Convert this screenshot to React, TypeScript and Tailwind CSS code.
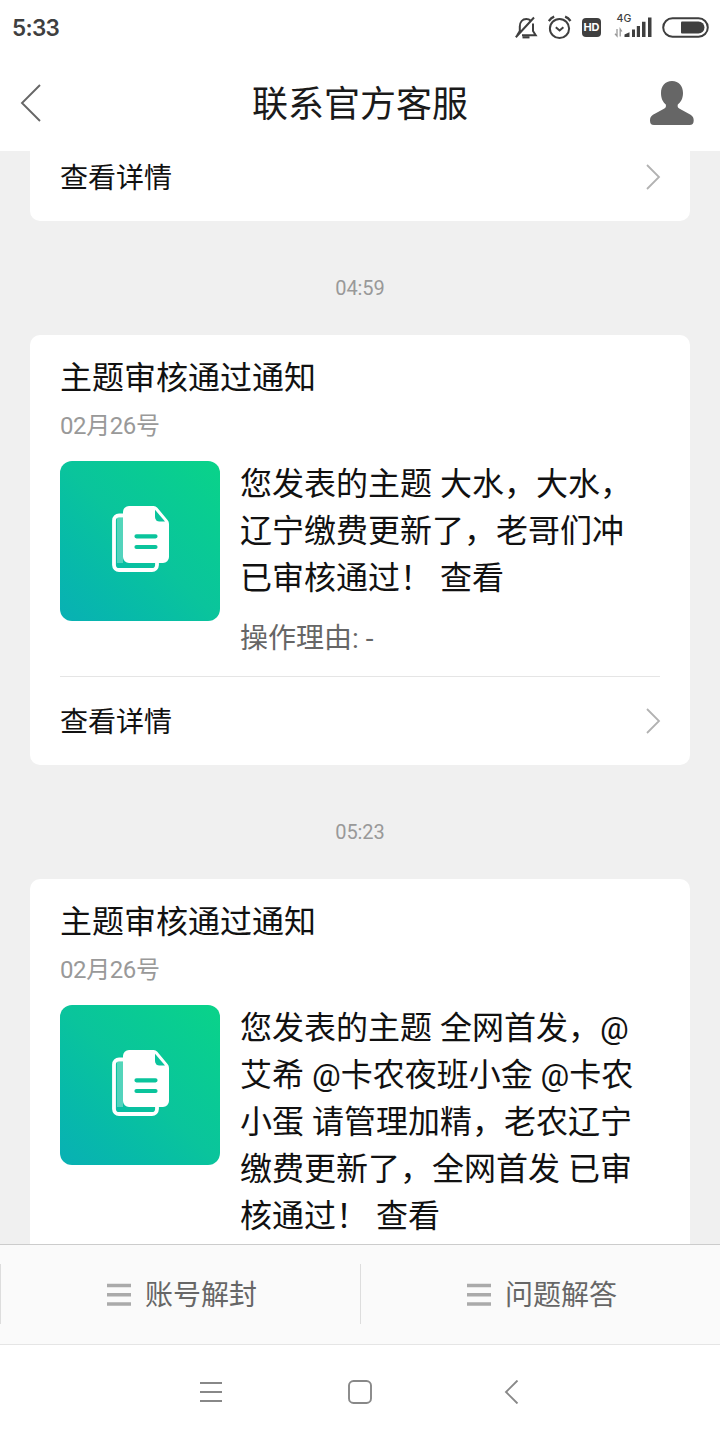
import { ReactNode } from 'react';

const messages = [
  {
    id: 1,
    time: '04:59',
    title: '主题审核通过通知',
    date: '02月26号',
    lines: ['您发表的主题 大水，大水，', '辽宁缴费更新了，老哥们冲', '已审核通过！ 查看'],
    reason: '操作理由: -',
  },
  {
    id: 2,
    time: '05:23',
    title: '主题审核通过通知',
    date: '02月26号',
    lines: ['您发表的主题 全网首发，@', '艾希 @卡农夜班小金 @卡农', '小蛋 请管理加精，老农辽宁', '缴费更新了，全网首发 已审', '核通过！ 查看'],
    reason: '',
  },
];

function StatusBar() {
  return (
    <div className="flex h-14 shrink-0 items-center justify-between pl-3 pr-[11px] text-[#3f3f3f]">
      <span className="font-['Inter'] text-[22.5px] font-semibold leading-none tracking-[-0.7px]">5:33</span>
      <div className="flex items-center">
        <svg width="24" height="26" viewBox="0 0 24 26" fill="none" stroke="currentColor" strokeWidth="2">
          <path d="M4.800 16.500V11.500C4.800 7 7.500 4 11.300 4c1.800 0 3.200.5 4.200 1.500M18 8.500V16l2.700 4.200H7M.8 22.300L19 2.500M4.800 16l-2.600 4.200" />
          <path d="M7.500 22.300h7" strokeWidth="2.200" />
        </svg>
        <svg className="ml-[9px]" width="24" height="26" viewBox="0 0 24 26" fill="none" stroke="currentColor" strokeWidth="2">
          <circle cx="11.500" cy="13.500" r="9.600" />
          <path d="M7.800 12.300l3.800 3.200 3.800-3.200" />
          <path d="M.8 6C2.200 4 4 2.500 6.200 1.700M22.500 6c-1.400-2-3.200-3.500-5.400-4.300" strokeWidth="2.300" />
        </svg>
        <span className="mb-[2px] ml-[10px] flex h-[19px] w-[19px] items-center justify-center rounded bg-[#3f3f3f] font-['Inter'] text-[11px] font-bold leading-none text-white">
          HD
        </span>
        <svg className="ml-[13px]" width="38" height="28" viewBox="0 0 38 28" fill="currentColor">
          <text x="2.500" y="8" fontSize="10.500" fontWeight="500" fontFamily="Inter, sans-serif">4G</text>
          <path d="M3 15v7L1 19.800M6.200 22.500V15l1.700 2.500" fill="none" stroke="#999" strokeWidth="1.300" />
          <path d="M10.500 23v-2.500l5-2.300V23zM18 15.500h3V23h-3zM22.800 12h3.200v11h-3.200zM28 7.800h3.500V23H28zM34 3.500h3.500V23H34z" />
        </svg>
        <svg className="ml-[10px]" width="47" height="22" viewBox="0 0 47 22" fill="none">
          <rect x="1.200" y="1.200" width="44.600" height="18.600" rx="9.300" stroke="currentColor" strokeWidth="2" />
          <path d="M20 4.500h16.500a6 6 0 0 1 0 12H20a1 1 0 0 1-1-1v-10a1 1 0 0 1 1-1z" fill="currentColor" />
        </svg>
      </div>
    </div>
  );
}

function Header() {
  return (
    <header className="flex h-[95px] shrink-0 items-center justify-between pl-5 pr-[25px]">
      <svg className="mb-[2px] mr-[5px]" width="46" height="40" viewBox="0 0 46 40" fill="none" stroke="#666" strokeWidth="1.900">
        <path d="M20 2L2 20l18 18" />
      </svg>
      <h1 className="pt-[2px] text-4xl text-[#1a1a1a]">联系官方客服</h1>
      <svg className="mb-[1px]" width="46" height="46" viewBox="0 0 46 46" fill="#666">
        <path d="M23 1C16 1 12 6 12 13c0 5.500 2 9 4.800 11.500.4 2 .1 3.200-1.400 4L4 34.800C1.700 36.200 1 38 1 40.500 1 43.500 2.200 45 5 45h35.500c2.800 0 4.200-1.500 4.200-4.500 0-2.500-.8-4.300-3.100-5.700L30.200 28.500c-1.500-.8-1.800-2-1.400-4C31.800 22 34 18.500 34 13 34 6 30 1 23 1z" />
      </svg>
    </header>
  );
}

function DetailLink() {
  return (
    <div className="flex h-[88px] items-center justify-between text-[28px] text-[#111]">
      <span className="pt-[3px]">查看详情</span>
      <svg className="-mr-[1px]" width="16" height="26" viewBox="0 0 16 26" fill="none" stroke="#b2b2b2" strokeWidth="1.800">
        <path d="M2 1l12 12L2 25" />
      </svg>
    </div>
  );
}

function TopicIcon() {
  return (
    <div className="flex h-40 w-40 shrink-0 items-center justify-center rounded-xl bg-linear-to-tr from-[#09b0b4] via-[#0ac49c] to-[#0ad389] pb-1">
      <svg width="58" height="66" viewBox="0 0 58 66" fill="none">
        <path d="M13 9.500H8A5 5 0 0 0 3 14.500V59a5 5 0 0 0 5 5h33a5 5 0 0 0 5-5v-3" stroke="#fff" strokeWidth="3.800" />
        <path d="M6 11.500h6V57H6z" fill="#fff" fillOpacity="0.300" />
        <path d="M18 0h24.500a5 5 0 0 1 3.800 1.700L56.500 14a6 6 0 0 1 1.500 4v33a6 6 0 0 1-6 6H18a6 6 0 0 1-6-6V6a6 6 0 0 1 6-6z" fill="#fff" />
        <path d="M44 3.800l10 11.700h-5.500a4.500 4.500 0 0 1-4.500-4.500z" fill="#0ac49c" />
        <path d="M25.500 30.300h19M25.500 41h19" stroke="#0ac49c" strokeWidth="4.200" strokeLinecap="round" />
      </svg>
    </div>
  );
}

function MessageCard({ message }: { message: (typeof messages)[number] }) {
  return (
    <div className="shrink-0 rounded-[10px] bg-white px-[30px] pt-[19px]">
      <h2 className="text-[32px] leading-[48px] text-[#111]">{message.title}</h2>
      <p className="mt-[7px] text-2xl leading-[34px] tracking-[-0.4px] text-[#999]">{message.date}</p>
      <div className="mt-[18px] flex gap-5 border-b border-[#e5e5e5] pb-[17px]">
        <TopicIcon />
        <div>
          <p className="whitespace-nowrap text-[32px] leading-[47px] text-[#111]">
            {message.lines.map(line => (
              <span key={line} className="block">{line}</span>
            ))}
          </p>
          {message.reason && <p className="mt-[17px] text-[28px] leading-10 text-[#666]">{message.reason}</p>}
        </div>
      </div>
      {message.reason && <DetailLink />}
    </div>
  );
}

function MenuButton({ children }: { children: ReactNode }) {
  return (
    <button className="flex h-[60px] flex-1 items-center justify-center border-l border-[#ddd] pl-[3px] text-[28px] text-[#666]">
      <svg className="mr-[14px] mt-[2px]" width="24" height="24" viewBox="0 0 24 24" stroke="#aaa" strokeWidth="3.400">
        <path d="M0 2.500h24M0 11.800h24M0 21h24" />
      </svg>
      <span className="pt-1">{children}</span>
    </button>
  );
}

function NavigationBar() {
  return (
    <div className="flex h-24 shrink-0 items-center justify-center border-t border-[#e5e5e5] bg-white pb-[2px] text-[#888]">
      <svg width="24" height="24" viewBox="0 0 24 24" stroke="currentColor" strokeWidth="1.800">
        <path d="M1 3h22M1 12h22M1 21h22" />
      </svg>
      <svg className="mx-[125px]" width="24" height="24" viewBox="0 0 24 24" fill="none" stroke="currentColor" strokeWidth="1.900">
        <rect x="1" y="1" width="22" height="22" rx="4.500" />
      </svg>
      <svg width="24" height="24" viewBox="0 0 24 24" fill="none" stroke="currentColor" strokeWidth="1.900">
        <path d="M20.500 .5L9 12l11.500 11.500" />
      </svg>
    </div>
  );
}

export default function App() {
  return (
    <div className="flex h-[1440px] w-[720px] flex-col overflow-hidden bg-white font-[Roboto,'Noto_Sans_CJK_SC',sans-serif]">
      <StatusBar />
      <Header />
      <main className="flex min-h-0 flex-1 flex-col overflow-hidden bg-[#f0f0f0] px-[30px]">
        <div className="-mt-[18px] shrink-0 rounded-[10px] bg-white px-[30px]">
          <DetailLink />
        </div>
        {messages.map(message => (
          <div key={message.id} className="shrink-0">
            <div className="flex h-[114px] items-center justify-center pt-5 text-xl tracking-[-0.1px] text-[#999]">{message.time}</div>
            <MessageCard message={message} />
          </div>
        ))}
      </main>
      <footer className="flex h-[100px] shrink-0 items-center border-t border-[#ccc] bg-[#fafafa] pb-[2px]">
        <MenuButton>账号解封</MenuButton>
        <MenuButton>问题解答</MenuButton>
      </footer>
      <NavigationBar />
    </div>
  );
}
